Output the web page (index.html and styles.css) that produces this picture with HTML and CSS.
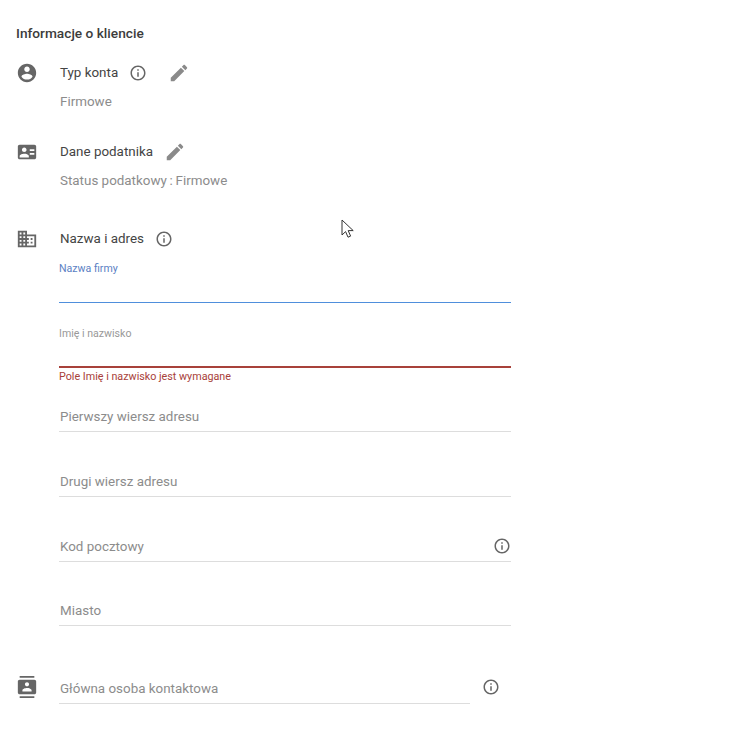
FILE: index.html
```html
<!DOCTYPE html>
<html lang="pl">
<head>
    <meta charset="UTF-8">
    <title>Informacje o kliencie</title>
    <link rel="stylesheet" href="styles.css">
</head>
<body>
    <div class="content">
        <h2 class="page-title">Informacje o kliencie</h2>

        <section class="section section-type">
            <svg class="section-icon" viewBox="0 0 24 24"><path d="M12 2C6.48 2 2 6.48 2 12s4.48 10 10 10 10-4.48 10-10S17.52 2 12 2zm0 3c1.66 0 3 1.34 3 3s-1.34 3-3 3-3-1.34-3-3 1.34-3 3-3zm0 14.2c-2.5 0-4.71-1.28-6-3.22.03-1.99 4-3.08 6-3.08 1.99 0 5.97 1.09 6 3.08-1.29 1.94-3.5 3.22-6 3.22z"/></svg>
            <div class="section-body">
                <div class="section-head">
                    <span class="section-title">Typ konta</span>
                    <svg class="info-icon" viewBox="0 0 24 24"><path d="M11 17h2v-6h-2v6zm1-15C6.48 2 2 6.48 2 12s4.48 10 10 10 10-4.48 10-10S17.52 2 12 2zm0 18c-4.41 0-8-3.59-8-8s3.59-8 8-8 8 3.59 8 8-3.59 8-8 8zm-1-11h2V7h-2v2z"/></svg>
                    <svg class="edit-icon edit-wide" viewBox="0 0 24 24"><path d="M3 17.25V21h3.75L17.81 9.94l-3.75-3.75L3 17.25zM20.71 7.04c.39-.39.39-1.02 0-1.41l-2.34-2.34c-.39-.39-1.02-.39-1.41 0l-1.83 1.83 3.75 3.75 1.83-1.83z"/></svg>
                </div>
                <p class="section-value">Firmowe</p>
            </div>
        </section>

        <section class="section section-tax">
            <svg class="section-icon" viewBox="0 0 24 24"><path fill-rule="evenodd" d="M20 4H4c-1.1 0-2 .9-2 2v12c0 1.1.9 2 2 2h16c1.1 0 2-.9 2-2V6c0-1.1-.9-2-2-2zM9 7c1.4 0 2.5 1.1 2.5 2.5S10.4 12 9 12s-2.5-1.1-2.5-2.5S7.6 7 9 7zm5 11H4v-1.5c0-1.7 3.3-2.5 5-2.5s5 .8 5 2.5V18zm6-3h-5v-2h5v2zm0-4h-5V9h5v2z"/></svg>
            <div class="section-body">
                <div class="section-head">
                    <span class="section-title">Dane podatnika</span>
                    <svg class="edit-icon" viewBox="0 0 24 24"><path d="M3 17.25V21h3.75L17.81 9.94l-3.75-3.75L3 17.25zM20.71 7.04c.39-.39.39-1.02 0-1.41l-2.34-2.34c-.39-.39-1.02-.39-1.41 0l-1.83 1.83 3.75 3.75 1.83-1.83z"/></svg>
                </div>
                <p class="section-value">Status podatkowy&#8201;:&#8201;Firmowe</p>
            </div>
        </section>

        <section class="section section-address">
            <svg class="section-icon" viewBox="0 0 24 24"><path d="M12 7V3H2v18h20V7H12zM6 19H4v-2h2v2zm0-4H4v-2h2v2zm0-4H4V9h2v2zm0-4H4V5h2v2zm4 12H8v-2h2v2zm0-4H8v-2h2v2zm0-4H8V9h2v2zm0-4H8V5h2v2zm10 12h-8v-2h2v-2h-2v-2h2v-2h-2V9h8v10zm-2-8h-2v2h2v-2zm0 4h-2v2h2v-2z"/></svg>
            <div class="section-body">
                <div class="section-head">
                    <span class="section-title">Nazwa i adres</span>
                    <svg class="info-icon" viewBox="0 0 24 24"><path d="M11 17h2v-6h-2v6zm1-15C6.48 2 2 6.48 2 12s4.48 10 10 10 10-4.48 10-10S17.52 2 12 2zm0 18c-4.41 0-8-3.59-8-8s3.59-8 8-8 8 3.59 8 8-3.59 8-8 8zm-1-11h2V7h-2v2z"/></svg>
                </div>
                <div class="field field-label focused">
                    <label>Nazwa firmy</label>
                </div>
                <div class="field field-label invalid">
                    <label>Imię i nazwisko</label>
                </div>
                <p class="field-error">Pole Imię i nazwisko jest wymagane</p>
                <div class="field field-first"><span class="placeholder">Pierwszy wiersz adresu</span></div>
                <div class="field"><span class="placeholder">Drugi wiersz adresu</span></div>
                <div class="field">
                    <span class="placeholder">Kod pocztowy</span>
                    <svg class="info-icon" viewBox="0 0 24 24"><path d="M11 17h2v-6h-2v6zm1-15C6.48 2 2 6.48 2 12s4.48 10 10 10 10-4.48 10-10S17.52 2 12 2zm0 18c-4.41 0-8-3.59-8-8s3.59-8 8-8 8 3.59 8 8-3.59 8-8 8zm-1-11h2V7h-2v2z"/></svg>
                </div>
                <div class="field field-last"><span class="placeholder">Miasto</span></div>
            </div>
        </section>

        <section class="section section-contact">
            <svg class="section-icon" viewBox="0 0 24 24"><path d="M20 0H4v2h16V0zM4 24h16v-2H4v2zM20 4H4c-1.1 0-2 .9-2 2v12c0 1.1.9 2 2 2h16c1.1 0 2-.9 2-2V6c0-1.1-.9-2-2-2zm-8 2.75c1.24 0 2.25 1.01 2.25 2.25s-1.01 2.25-2.25 2.25S9.75 10.24 9.75 9 10.76 6.75 12 6.75zM17 17H7v-1.5c0-1.67 3.33-2.5 5-2.5s5 .83 5 2.5V17z"/></svg>
            <div class="contact-row">
                <div class="field field-contact"><span class="placeholder">Główna osoba kontaktowa</span></div>
                <svg class="info-icon" viewBox="0 0 24 24"><path d="M11 17h2v-6h-2v6zm1-15C6.48 2 2 6.48 2 12s4.48 10 10 10 10-4.48 10-10S17.52 2 12 2zm0 18c-4.41 0-8-3.59-8-8s3.59-8 8-8 8 3.59 8 8-3.59 8-8 8zm-1-11h2V7h-2v2z"/></svg>
            </div>
        </section>
    </div>

    <svg class="cursor" viewBox="0 0 14 20"><path d="M1 1v15l3.6-3.4 2.4 5.6 2.6-1.1-2.4-5.5h5z"/></svg>
</body>
</html>
```

FILE: styles.css
```css
html, body {
    height: 100%;
}
body {
    font-family: Roboto, "Liberation Sans", sans-serif;
    margin: 0;
    padding: 0;
    background-color: #fff;
    color: #444;
    font-size: 13.4px;
    overflow: hidden;
    position: relative;
}
.content {
    padding: 25px 0 0 16px;
}
.page-title {
    margin: 0 0 21px;
    font-size: 13.7px;
    line-height: 16px;
    font-weight: 500;
    color: #3c3c3c;
}
.section {
    display: flex;
    align-items: flex-start;
}
.section-type {
    height: 79px;
}
.section-tax {
    height: 87px;
}
.section-address {
    height: 446px;
}
.section-icon {
    width: 22px;
    height: 22px;
    margin-right: 21px;
    fill: #666;
    flex: none;
}
.section-body {
    width: 452px;
    margin-top: 1px;
}
.section-head {
    display: flex;
    align-items: center;
    height: 20px;
}
.section-title {
    color: #444;
    line-height: 20px;
    padding-left: 1px;
}
.section-value {
    margin: 10px 0 0;
    padding-left: 1px;
    line-height: 18px;
    color: #8c8c8c;
}
.info-icon {
    width: 18px;
    height: 18px;
    fill: #666;
    margin-left: 11px;
    flex: none;
}
.edit-icon {
    width: 22px;
    height: 22px;
    fill: #8a8a8a;
    margin-left: 11px;
}
.edit-wide {
    margin-left: 21px;
}
.field {
    height: 65px;
    box-sizing: border-box;
    border-bottom: 1px solid #ddd;
    display: flex;
    align-items: flex-end;
    justify-content: space-between;
    padding-bottom: 5px;
}
.field .info-icon {
    margin: 0;
    position: relative;
    top: -1px;
}
.field-label {
    align-items: flex-start;
    padding: 0;
}
.field-label label {
    font-size: 10.6px;
    line-height: 14px;
}
.focused {
    height: 54px;
    padding-top: 13px;
    border-bottom-color: #4f8fdc;
}
.focused label {
    color: #5b7fc4;
}
.invalid {
    height: 65px;
    padding-top: 24px;
    border-bottom: 2px solid #a8413a;
}
.invalid label {
    color: #999;
}
.field-error {
    margin: 2px 0 0;
    font-size: 10.75px;
    line-height: 13px;
    color: #a8413a;
}
.field-first {
    height: 49px;
}
.field-last {
    height: 64px;
}
.placeholder {
    color: #8c8c8c;
    line-height: 18px;
    padding-left: 1px;
}
.contact-row {
    display: flex;
    align-items: flex-end;
}
.field-contact {
    width: 411px;
    height: 30px;
    flex: none;
}
.contact-row .info-icon {
    margin: 0 0 8px 12px;
}
.section-contact .section-icon {
    margin-top: 2px;
}
.cursor {
    position: absolute;
    left: 341px;
    top: 219px;
    width: 14px;
    height: 20px;
    fill: #fff;
    stroke: #333;
    stroke-width: 1;
}
```
